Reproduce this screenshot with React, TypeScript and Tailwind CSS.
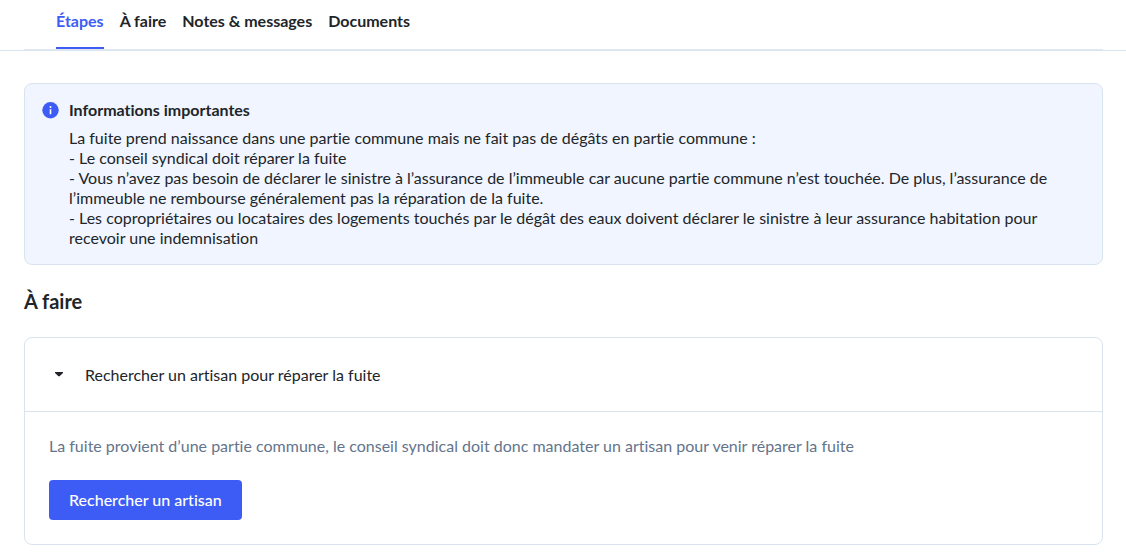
import React from "react";

const tabs = ["Étapes", "À faire", "Notes & messages", "Documents"];

function Tabs() {
  return (
    <header className="border-b border-[#d9e4ee] pr-[23px] pl-6">
      <nav className="flex h-[50px] gap-4 border-b border-[#e2e8f0] px-8">
        {tabs.map((tab, i) => (
          <a
            key={tab}
            href="#"
            className={`flex items-start border-b-2 pt-[9px] font-bold leading-6 ${
              i === 0 ? "border-[#3d5cf5] text-[#3d5cf5]" : "border-transparent"
            }`}
          >
            {tab}
          </a>
        ))}
      </nav>
    </header>
  );
}

function InfoIcon() {
  return (
    <svg className="mt-0.5 h-[17px] w-[17px] shrink-0" viewBox="0 0 17 17" aria-hidden="true">
      <circle cx="8.5" cy="8.2" r="8.2" fill="#3d5cf5" />
      <circle cx="8.5" cy="5" r="1" fill="#fff" />
      <path d="M8.5 7.2v5" stroke="#fff" strokeWidth="1.6" />
    </svg>
  );
}

function InfoBox() {
  return (
    <section className="flex gap-[10px] rounded-lg border border-[#d9e4ee] bg-[#f0f5ff] px-[17px] py-4">
      <InfoIcon />
      <div className="flex-1 pr-8">
        <h2 className="font-bold leading-5">Informations importantes</h2>
        <p className="mt-2 leading-5">
          La fuite prend naissance dans une partie commune mais ne fait pas de dégâts en partie commune :
          <br />
          - Le conseil syndical doit réparer la fuite
          <br />
          - Vous n’avez pas besoin de déclarer le sinistre à l’assurance de l’immeuble car aucune partie commune n’est
          touchée. De plus, l’assurance de l’immeuble ne rembourse généralement pas la réparation de la fuite.
          <br />
          - Les copropriétaires ou locataires des logements touchés par le dégât des eaux doivent déclarer le sinistre à
          leur assurance habitation pour recevoir une indemnisation
        </p>
      </div>
    </section>
  );
}

export default function App() {
  return (
    <div className="bg-white font-['Lato',sans-serif] text-base text-[#212529] [font-variant-ligatures:none]">
      <Tabs />
      <main className="pt-8 pr-[23px] pb-4 pl-6">
        <InfoBox />
        <h2 className="mt-6 text-xl font-bold leading-6">À faire</h2>
        <section className="mt-6 rounded-lg border border-[#d9e4ee]">
          <button
            type="button"
            aria-expanded="true"
            className="flex w-full items-center gap-[22px] border-b border-[#d9e4ee] px-[30px] pt-[25px] pb-6 text-left leading-6"
          >
            <svg className="h-2 w-2" viewBox="0 0 8 8" aria-hidden="true">
              <path d="M0 1h8v1L4.6 5.2H3.4L0 2z" fill="currentColor" />
            </svg>
            Rechercher un artisan pour réparer la fuite
          </button>
          <div className="p-6">
            <p className="leading-5 text-[#64748b]">
              La fuite provient d’une partie commune, le conseil syndical doit donc mandater un artisan pour venir
              réparer la fuite
            </p>
            <button type="button" className="mt-6 h-10 rounded bg-[#3d5cf5] px-5 font-medium text-white">
              Rechercher un artisan
            </button>
          </div>
        </section>
      </main>
    </div>
  );
}
